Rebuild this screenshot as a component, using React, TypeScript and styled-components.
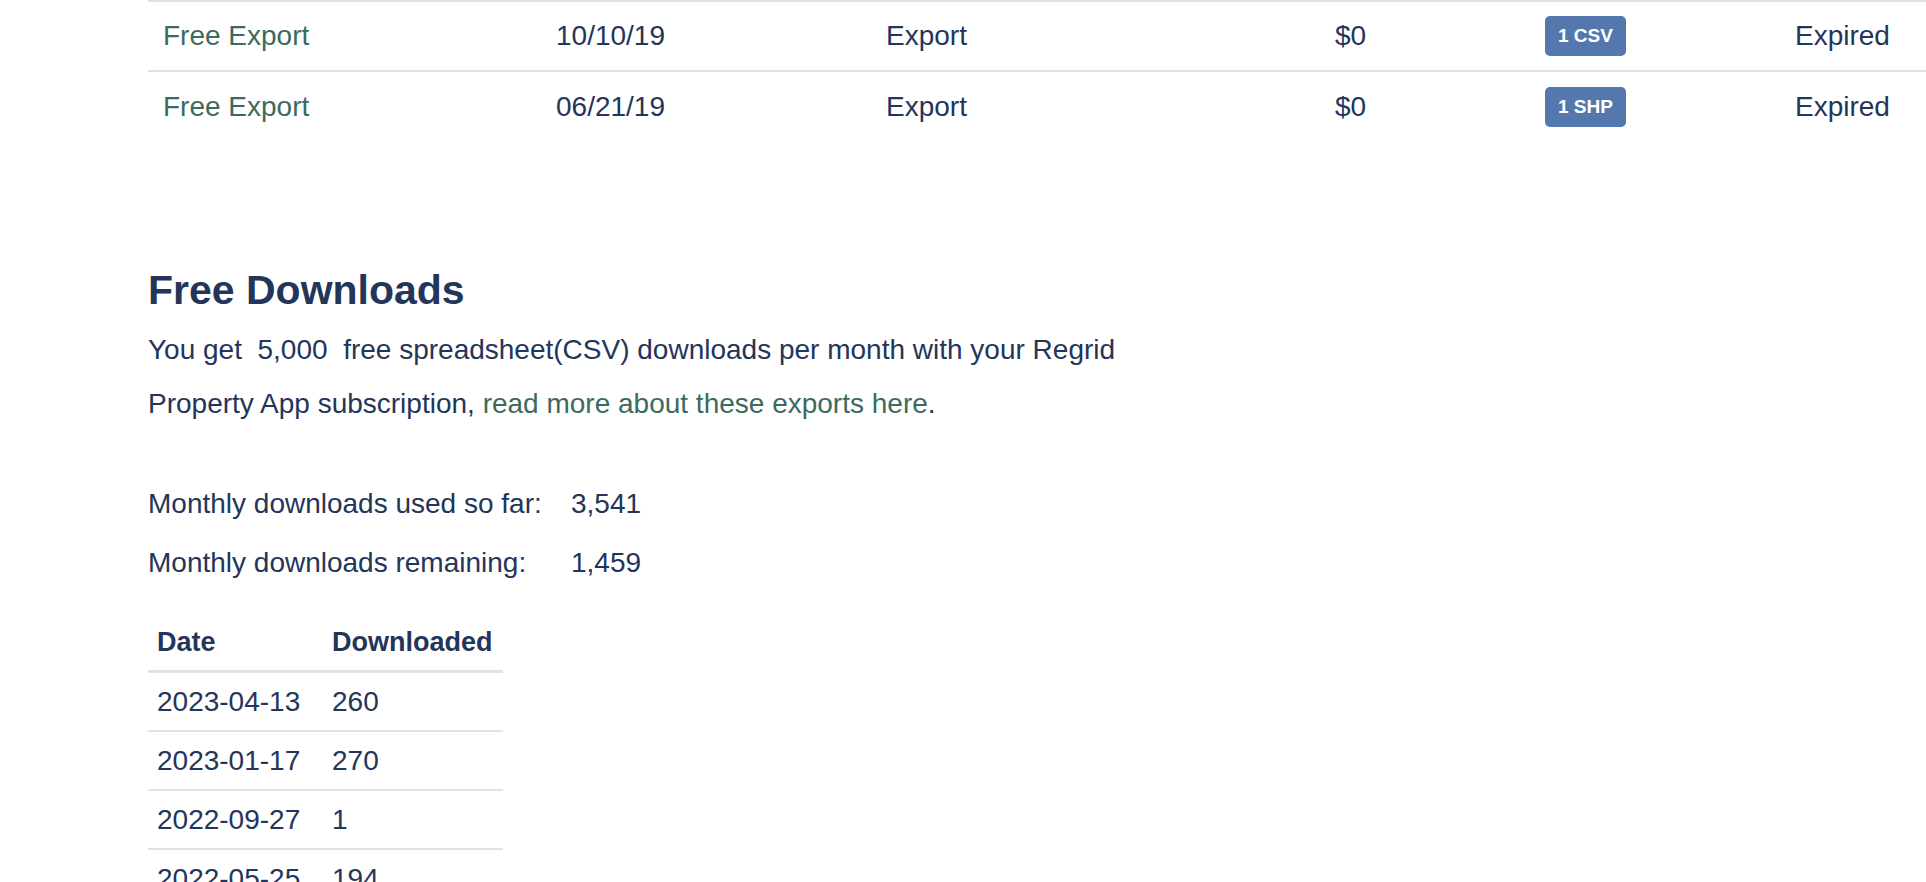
import React from "react";
import styled, { createGlobalStyle } from "styled-components";

const ink = "#24355a";
const green = "#3c6b5e";
const rule = "#e1e3e6";

const GlobalStyle = createGlobalStyle`
  html, body {
    margin: 0;
    padding: 0;
    background: #ffffff;
    overflow: hidden;
  }
  body {
    font-family: "Liberation Sans", Arial, sans-serif;
    color: ${ink};
    -webkit-font-smoothing: antialiased;
  }
`;

const Page = styled.main`
  width: 1926px;
  height: 882px;
  padding-left: 148px;
  box-sizing: border-box;
  display: flex;
  flex-direction: column;
  align-items: flex-start;
`;

/* ---------- order history table ---------- */

const OrdersTable = styled.table`
  border-collapse: collapse;
  table-layout: fixed;
  width: 1812px;
  flex-shrink: 0;
  font-size: 28px;
`;

const OrderRow = styled.tr`
  border-top: 2px solid ${rule};
`;

const OrderCell = styled.td<{ $w: number }>`
  box-sizing: border-box;
  width: ${(p) => p.$w}px;
  height: 70px;
  padding: 0 0 0 15px;
  vertical-align: middle;
  line-height: 32px;
  white-space: nowrap;
  color: ${ink};
`;

const OrderLink = styled.a`
  color: ${green};
  text-decoration: none;
`;

const FileBadge = styled.span`
  display: inline-block;
  height: 40px;
  line-height: 40px;
  padding: 0 13px;
  border-radius: 5px;
  background: #5478ad;
  color: #ffffff;
  font-size: 19px;
  font-weight: 700;
  vertical-align: middle;
`;

/* ---------- free downloads section ---------- */

const Section = styled.section`
  margin-top: 125px;
  display: flex;
  flex-direction: column;
  align-items: flex-start;
`;

const Heading = styled.h2`
  margin: 0;
  font-size: 41px;
  line-height: 48px;
  font-weight: 700;
  color: ${ink};
`;

const Intro = styled.p`
  margin: 9px 0 0;
  max-width: 1060px;
  font-size: 28px;
  line-height: 54px;
`;

const IntroLink = styled.a`
  color: ${green};
  text-decoration: none;
`;

const Stats = styled.dl`
  margin: 43px 0 0;
  display: grid;
  grid-template-columns: 423px auto;
  grid-auto-rows: 59px;
  align-items: center;
  font-size: 28px;
  line-height: 32px;
`;

const StatLabel = styled.dt`
  margin: 0;
`;

const StatValue = styled.dd`
  margin: 0;
`;

const HistoryTable = styled.table`
  margin-top: 26px;
  border-collapse: collapse;
  table-layout: fixed;
  width: 355px;
  font-size: 28px;
`;

const HistoryHead = styled.th<{ $w: number }>`
  box-sizing: border-box;
  width: ${(p) => p.$w}px;
  padding: 8px 9px 12px;
  text-align: left;
  font-size: 27px;
  line-height: 32px;
  font-weight: 700;
  border-bottom: 3px solid ${rule};
`;

const HistoryCell = styled.td`
  height: 57px;
  padding: 0 9px;
  line-height: 32px;
  vertical-align: middle;
  border-bottom: 2px solid ${rule};
  white-space: nowrap;
`;

type Order = {
  name: string;
  date: string;
  kind: string;
  price: string;
  files: string;
  status: string;
};

const orders: Order[] = [
  { name: "Free Export", date: "10/10/19", kind: "Export", price: "$0", files: "1 CSV", status: "Expired" },
  { name: "Free Export", date: "06/21/19", kind: "Export", price: "$0", files: "1 SHP", status: "Expired" },
];

const columnWidths = [393, 330, 449, 210, 250, 180];

const history: [string, string][] = [
  ["2023-04-13", "260"],
  ["2023-01-17", "270"],
  ["2022-09-27", "1"],
  ["2022-05-25", "194"],
];

export default function App() {
  return (
    <>
      <GlobalStyle />
      <Page>
        <OrdersTable>
          <tbody>
            {orders.map((o, i) => (
              <OrderRow key={i}>
                <OrderCell $w={columnWidths[0]}>
                  <OrderLink href="#">{o.name}</OrderLink>
                </OrderCell>
                <OrderCell $w={columnWidths[1]}>{o.date}</OrderCell>
                <OrderCell $w={columnWidths[2]}>{o.kind}</OrderCell>
                <OrderCell $w={columnWidths[3]}>{o.price}</OrderCell>
                <OrderCell $w={columnWidths[4]}>
                  <FileBadge>{o.files}</FileBadge>
                </OrderCell>
                <OrderCell $w={columnWidths[5]}>{o.status}</OrderCell>
              </OrderRow>
            ))}
          </tbody>
        </OrdersTable>

        <Section>
          <Heading>Free Downloads</Heading>
          <Intro>
            {"You get\u00a0 5,000\u00a0 free spreadsheet(CSV) downloads per month with your Regrid Property App subscription, "}
            <IntroLink href="#">read more about these exports here</IntroLink>.
          </Intro>

          <Stats>
            <StatLabel>Monthly downloads used so far:</StatLabel>
            <StatValue>3,541</StatValue>
            <StatLabel>Monthly downloads remaining:</StatLabel>
            <StatValue>1,459</StatValue>
          </Stats>

          <HistoryTable>
            <thead>
              <tr>
                <HistoryHead $w={175}>Date</HistoryHead>
                <HistoryHead $w={180}>Downloaded</HistoryHead>
              </tr>
            </thead>
            <tbody>
              {history.map(([d, n]) => (
                <tr key={d}>
                  <HistoryCell>{d}</HistoryCell>
                  <HistoryCell>{n}</HistoryCell>
                </tr>
              ))}
            </tbody>
          </HistoryTable>
        </Section>
      </Page>
    </>
  );
}
